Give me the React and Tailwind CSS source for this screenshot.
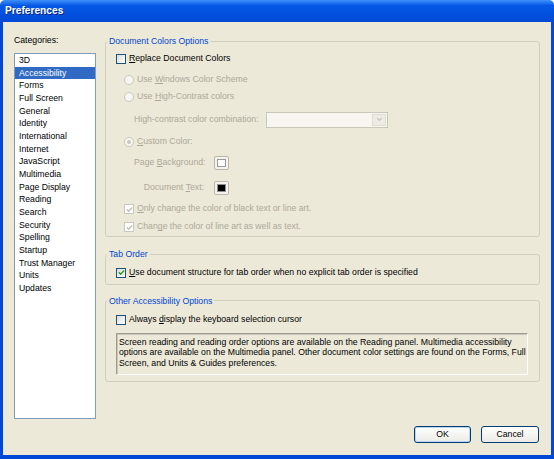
import React from 'react';

const categories = [
    '3D', 'Accessibility', 'Forms', 'Full Screen', 'General', 'Identity', 'International',
    'Internet', 'JavaScript', 'Multimedia', 'Page Display', 'Reading', 'Search', 'Security',
    'Spelling', 'Startup', 'Trust Manager', 'Units', 'Updates',
];

const Check = ({ checked, disabled }) => (
    <span
        className={
            disabled
                ? 'w-[10px] h-[10px] shrink-0 border border-[#CAC8BB] bg-white flex items-center justify-center'
                : 'w-[10px] h-[10px] shrink-0 border border-[#1C5180] bg-linear-to-br from-[#DCDCD7] to-white flex items-center justify-center'
        }
    >
        {checked && (
            <svg viewBox="0 0 8 8" className="w-[7px] h-[7px]">
                <path
                    d="M1 3.8 L3 5.9 L7 1.6"
                    fill="none"
                    stroke={disabled ? '#C4C2B3' : '#21A121'}
                    strokeWidth="1.7"
                />
            </svg>
        )}
    </span>
);

const Radio = ({ checked }) => (
    <span className="w-[10px] h-[10px] shrink-0 rounded-full border border-[#CAC8BB] bg-[#F7F6F1] flex items-center justify-center">
        {checked && <span className="w-[4px] h-[4px] rounded-full bg-[#CAC8BB]" />}
    </span>
);

const Group = ({ title, className, children }) => (
    <fieldset className={`border border-[#D0D0BF] rounded-[3px] pl-[1px] pr-[11px] ${className}`}>
        <legend className="px-[2px] leading-[12px] text-[#0046D5]">{title}</legend>
        <div className="pl-[9px]">{children}</div>
    </fieldset>
);

const Swatch = ({ dark }) => (
    <span className="w-[15px] h-[14px] rounded-[2px] border border-[#B9B7A8] bg-[#F4F3EE] p-[2px] flex">
        <span className={dark ? 'flex-1 bg-black border border-[#8E8E8E]' : 'flex-1 bg-white border border-[#9A9A9A]'} />
    </span>
);

export default function App() {
    return (
        <div className="w-[554px] h-[459px] flex flex-col font-['Liberation_Sans',Arial,sans-serif] text-[8.7px] text-black select-none">
            {/* title bar */}
            <div className="h-[22px] shrink-0 rounded-t-[5px] bg-linear-to-b from-[#3D8FF8] via-[#0558E6] via-25% to-[#0049D6] flex items-center pl-[5px]">
                <span className="text-white font-bold text-[10.2px] [text-shadow:1px_1px_0_#0A2A7A]">Preferences</span>
            </div>

            {/* dialog body */}
            <div className="flex-1 flex flex-col bg-[#ECE9D8] border-l-[3px] border-r-[3px] border-b-[4px] border-[#0048D5]">
                <div className="flex pt-[12px] pl-[11px]">
                    {/* categories */}
                    <div className="w-[82px] flex flex-col">
                        <div className="leading-[12px] h-[12px]">Categories:</div>
                        <div className="mt-[7px] h-[366px] bg-white border border-[#7F9DB9]">
                            {categories.map((c) => (
                                <div
                                    key={c}
                                    className={
                                        c === 'Accessibility'
                                            ? 'h-[12.67px] leading-[12.67px] pl-[4px] bg-[#316AC5] text-white'
                                            : 'h-[12.67px] leading-[12.67px] pl-[4px]'
                                    }
                                >
                                    {c}
                                </div>
                            ))}
                        </div>
                    </div>

                    {/* options */}
                    <div className="ml-[9px] w-[435px] mt-[1px] flex flex-col">
                        <Group title="Document Colors Options">
                            <div className="pt-[5px] pb-[2px] text-[#ACA899]">
                                <div className="h-[14px] flex items-center gap-[3px] text-black">
                                    <Check />
                                    <span><u>R</u>eplace Document Colors</span>
                                </div>
                                <div className="mt-[7px] h-[14px] pl-[8px] flex items-center gap-[3px]">
                                    <Radio />
                                    <span>Use <u>W</u>indows Color Scheme</span>
                                </div>
                                <div className="mt-[3px] h-[14px] pl-[8px] flex items-center gap-[3px]">
                                    <Radio />
                                    <span>Use <u>H</u>igh-Contrast colors</span>
                                </div>
                                <div className="mt-[7px] h-[17px] pl-[18px] flex items-center">
                                    <span className="w-[132px] whitespace-nowrap">High-contrast color combination:</span>
                                    <span className="w-[122px] h-[16px] border border-[#C9C7BA] bg-[#F7F6F1] flex justify-end p-[1px]">
                                        <span className="w-[14px] bg-[#EDECE4] border border-[#E0DFD5] flex items-center justify-center">
                                            <svg viewBox="0 0 8 8" className="w-[7px] h-[7px]">
                                                <path d="M1.5 2.5 L4 5 L6.5 2.5" fill="none" stroke="#C3C1B4" strokeWidth="1.4" />
                                            </svg>
                                        </span>
                                    </span>
                                </div>
                                <div className="mt-[7px] h-[14px] pl-[8px] flex items-center gap-[3px]">
                                    <Radio checked />
                                    <span><u>C</u>ustom Color:</span>
                                </div>
                                <div className="mt-[6px] h-[16px] pl-[18px] flex items-center">
                                    <span className="w-[70px] text-right whitespace-nowrap">
                                        <span>Page&nbsp;<u>B</u>ackground:</span>
                                    </span>
                                    <span className="ml-[10px]"><Swatch /></span>
                                </div>
                                <div className="mt-[9px] h-[16px] pl-[18px] flex items-center">
                                    <span className="w-[70px] text-right whitespace-nowrap">
                                        <span>Document&nbsp;<u>T</u>ext:</span>
                                    </span>
                                    <span className="ml-[10px]"><Swatch dark /></span>
                                </div>
                                <div className="mt-[6px] h-[14px] pl-[8px] flex items-center gap-[3px]">
                                    <Check checked disabled />
                                    <span><u>O</u>nly change the color of black text or line art.</span>
                                </div>
                                <div className="mt-[4px] h-[14px] pl-[8px] flex items-center gap-[3px]">
                                    <Check checked disabled />
                                    <span>Chan<u>g</u>e the color of line art as well as text.</span>
                                </div>
                            </div>
                        </Group>

                        <Group title="Tab Order" className="mt-[11px]">
                            <div className="pt-[5.5px] pb-[4px]">
                                <div className="h-[14px] flex items-center gap-[3px]">
                                    <Check checked />
                                    <span><u>U</u>se document structure for tab order when no explicit tab order is specified</span>
                                </div>
                            </div>
                        </Group>

                        <Group title="Other Accessibility Options" className="mt-[10px]">
                            <div className="pt-[6px] pb-[6px]">
                                <div className="h-[14px] flex items-center gap-[3px]">
                                    <Check />
                                    <span>Always <u>d</u>isplay the keyboard selection cursor</span>
                                </div>
                                <div className="mt-[6px] h-[42px] border border-t-[#9D9D92] border-l-[#9D9D92] border-r-white border-b-white shadow-[inset_1px_1px_0_#C9C6B8] pl-[2px] pt-[3px] leading-[10.5px]">
                                    Screen reading and reading order options are available on the Reading panel. Multimedia accessibility
                                    <br />
                                    options are available on the Multimedia panel. Other document color settings are found on the Forms, Full
                                    <br />
                                    Screen, and Units &amp; Guides preferences.
                                </div>
                            </div>
                        </Group>
                    </div>
                </div>

                {/* buttons */}
                <div className="mt-auto pb-[12px] pr-[12px] flex justify-end gap-[10px]">
                    <button className="w-[57px] h-[17px] rounded-[3px] border border-[#003C74] bg-linear-to-b from-white to-[#ECEBE6] shadow-[inset_0_0_0_1px_#BCD4F6]">
                        OK
                    </button>
                    <button className="w-[58px] h-[17px] rounded-[3px] border border-[#003C74] bg-linear-to-b from-white to-[#ECEBE6]">
                        Cancel
                    </button>
                </div>
            </div>
        </div>
    );
}
